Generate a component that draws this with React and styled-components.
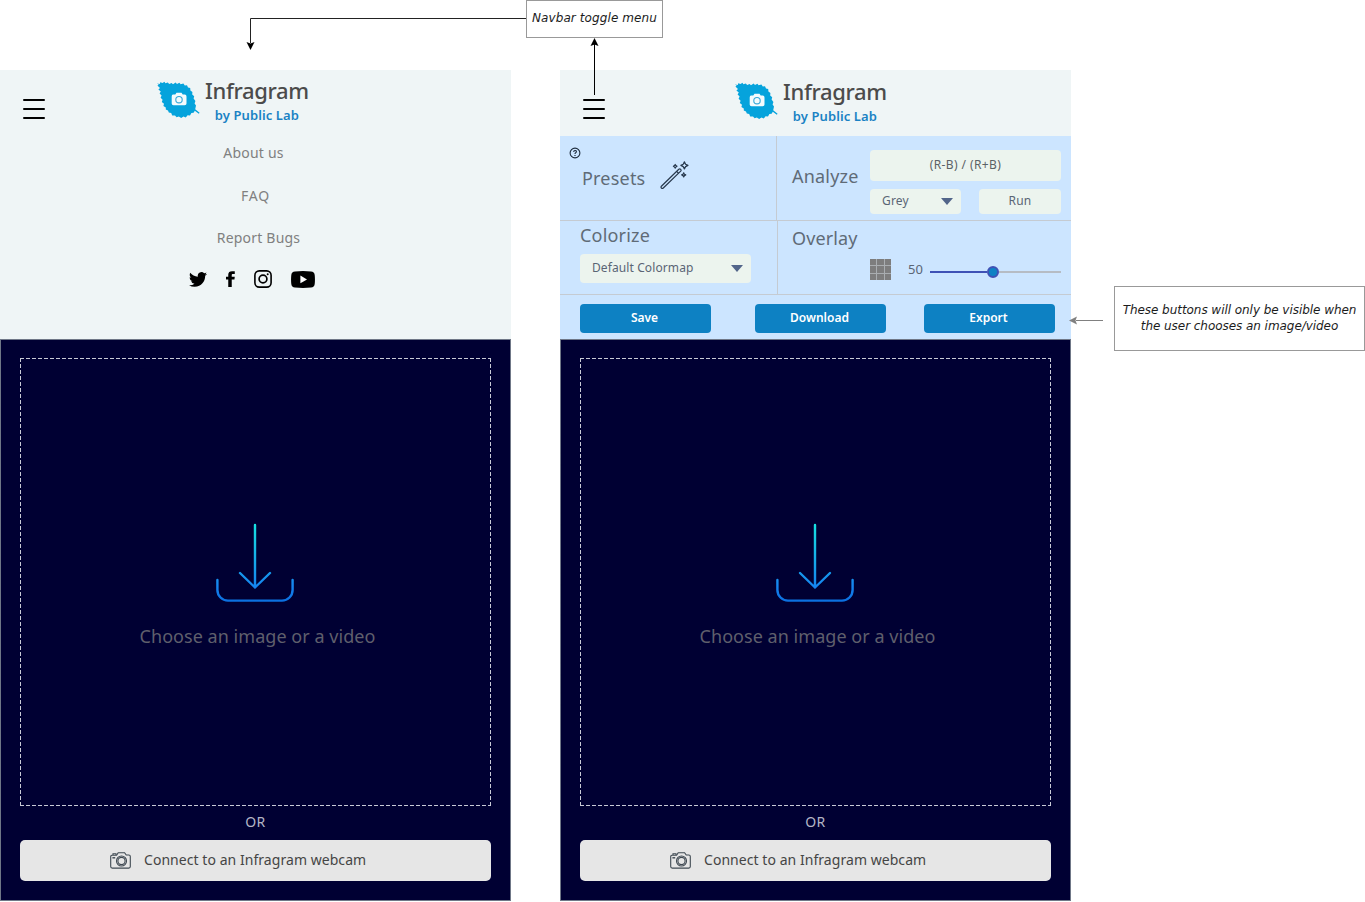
import React, { useState } from 'react';
import styled, { createGlobalStyle } from 'styled-components';

const GlobalStyle = createGlobalStyle`
  * {
    box-sizing: border-box;
  }
  body {
    margin: 0;
    background-color: #ffffff;
    font-family: 'Noto Sans', 'Open Sans', sans-serif;
    overflow: hidden;
  }
  svg {
    display: block;
    flex-shrink: 0;
  }
  button {
    font-family: inherit;
    border: 0;
    padding: 0;
    cursor: pointer;
  }
`

const Board = styled.div`
  position: relative;
  width: 1365px;
  height: 902px;
`

const TopRow = styled.div`
  height: 70px;
  padding-left: 526px;
`

const Note = styled.div`
  display: flex;
  align-items: center;
  justify-content: center;
  text-align: center;
  width: ${props => props.$width}px;
  height: ${props => props.$height}px;
  padding-bottom: 2px;
  border: 1px solid #999999;
  background-color: #ffffff;
  color: #1c1c1c;
  font-family: 'DejaVu Sans', sans-serif;
  font-size: 12px;
  font-style: italic;
  line-height: 16px;
  letter-spacing: ${props => props.$spacing}px;
  white-space: nowrap;
`

const Connectors = styled.svg`
  position: absolute;
  left: 0;
  top: 0;
  pointer-events: none;
`

const Screens = styled.div`
  display: flex;
`

const Phone = styled.div`
  width: 511px;
  height: 831px;
  margin-right: ${props => props.$gap}px;
  display: flex;
  flex-direction: column;
`

const SideNote = styled.div`
  padding-top: 216px;
`

const Text = styled.span`
  display: block;
  white-space: nowrap;
  font-size: ${props => props.$size || 14}px;
  line-height: ${props => props.$line || 20}px;
  font-weight: ${props => props.$weight || 400};
  letter-spacing: ${props => props.$spacing || 0}px;
  color: ${props => props.$color || '#808080'};
`

const Header = styled.header`
  height: 66px;
  display: flex;
  background-color: #eff5f6;
`

const MenuButton = styled.button`
  width: 22px;
  height: 20px;
  margin: 29px 0 0 23px;
  display: flex;
  flex-direction: column;
  justify-content: space-between;
  background: none;
  span {
    height: 2px;
    width: 22px;
    border-radius: 1px;
    background-color: #000000;
  }
`

const Brand = styled.div`
  display: flex;
  margin-left: ${props => props.$left}px;
  padding-top: ${props => props.$top}px;
`

const BrandName = styled.div`
  margin-left: 5px;
  display: flex;
  flex-direction: column;
  align-items: center;
`

const NavMenu = styled.nav`
  height: 203px;
  background-color: #eff5f6;
  display: flex;
  flex-direction: column;
  align-items: center;
`

const NavLink = styled(Text)`
  height: 20px;
  margin: ${props => props.$margin};
`

const Social = styled.div`
  display: flex;
  align-items: center;
  height: 20px;
  margin: 21px 0 0 -7px;
  svg + svg {
    margin-left: 19px;
  }
`

const Controls = styled.div`
  height: 203px;
  background-color: #cce5ff;
`

const ControlRow = styled.div`
  display: flex;
  height: ${props => props.$height}px;
  border-bottom: 1px solid #c5cbd2;
`

const Pane = styled.div`
  width: ${props => props.$width}px;
  padding: ${props => props.$padding};
  border-right: ${props => (props.$divider ? '1px solid #c5cbd2' : '0')};
`

const PaneTitle = styled(Text).attrs({
  $size: 18,
  $line: 24,
  $color: '#5f6b77'
})``

const Line = styled.div`
  display: flex;
  align-items: flex-start;
`

const PresetLine = styled(Line)`
  gap: 15px;
  padding: 2px 0 0 13px;
  ${PaneTitle} {
    margin-top: 5px;
  }
`

const AnalyzeLine = styled(Line)`
  ${PaneTitle} {
    width: 78px;
    margin-top: 14px;
  }
`

const OverlayLine = styled(Line)`
  padding: 9px 0 0 78px;
`

const Percent = styled(Text)`
  width: 22px;
  margin-left: 17px;
`

const AnalyzeGrid = styled.div`
  display: grid;
  grid-template-columns: 91px 82px;
  grid-template-rows: 31px 25px;
  gap: 8px 18px;
`

const Field = styled.div`
  display: flex;
  align-items: center;
  justify-content: ${props => (props.$select ? 'space-between' : 'center')};
  grid-column: ${props => (props.$wide ? '1 / 3' : 'auto')};
  width: ${props => (props.$width ? `${props.$width}px` : '100%')};
  height: ${props => props.$height}px;
  padding: ${props => (props.$select ? '0 8px 2px 12px' : '0 0 2px')};
  border-radius: 4px;
  background-color: #ecf4ee;
`

const ColormapLine = styled(Line)`
  margin-top: 7px;
`

const Caret = styled.div`
  width: 0;
  height: 0;
  margin-top: 2px;
  border: 6px solid transparent;
  border-top: 7px solid #52658a;
  border-bottom: 0;
`

const Tiles = styled.div`
  width: 21px;
  height: 21px;
  display: grid;
  grid-template-columns: repeat(3, 1fr);
  gap: 1px;
  background-color: #a9adb0;
  span {
    background-color: #7d7d7d;
  }
`

const Slider = styled.div`
  display: flex;
  align-items: center;
  width: 131px;
  height: 12px;
  margin-top: 7px;
`

const Track = styled.div`
  flex: ${props => props.$grow};
  height: 2px;
  background-color: ${props => props.$color};
`

const Thumb = styled.div`
  width: 12px;
  height: 12px;
  border-radius: 50%;
  border: 2px solid #3f51b5;
  background-color: #0e81c4;
`

const Actions = styled.div`
  display: flex;
  padding: 9px 0 0 20px;
`

const ActionButton = styled.button`
  width: 131px;
  height: 29px;
  margin-right: ${props => props.$gap}px;
  padding: 0 2px 1px 0;
  border-radius: 4px;
  background-color: #0d81c3;
  display: flex;
  align-items: center;
  justify-content: center;
`

const Stage = styled.main`
  flex: 1;
  display: flex;
  flex-direction: column;
  align-items: center;
  padding: 18px 19px 19px;
  border: 1px solid #6f7787;
  background-color: #000033;
`

const DropFrame = styled.div`
  width: 471px;
  height: 448px;
  background:
    repeating-linear-gradient(90deg, #c8cad6 0 4px, transparent 4px 6px) 0 0 / 100% 1px no-repeat,
    repeating-linear-gradient(90deg, #c8cad6 0 4px, transparent 4px 6px) 0 100% / 100% 1px no-repeat,
    repeating-linear-gradient(180deg, #c8cad6 0 4px, transparent 4px 6px) 0 0 / 1px 100% no-repeat,
    repeating-linear-gradient(180deg, #c8cad6 0 4px, transparent 4px 6px) 100% 0 / 1px 100% no-repeat;
`

const DropArea = styled.div`
  display: flex;
  flex-direction: column;
  align-items: center;
  padding: 165px 1px 0 0;
`

const DropText = styled(Text)`
  margin: 21px 0 0 5px;
`

const OrText = styled(Text)`
  height: 34px;
`

const WebcamButton = styled.button`
  width: 471px;
  height: 41px;
  display: flex;
  align-items: center;
  padding-left: 90px;
  border-radius: 5px;
  background-color: #e6e6e6;
  span {
    margin: 0 0 2px 13px;
  }
`

const LeafLogo = () => (
  <svg width="43" height="38" viewBox="0 0 43 38">
    <path
      fill="#05a3dc"
      d="M0 2.4 L2.8 3 L3.2 1.2 L5.6 2 L7.4 0.8 L8.4 2.2 L10.8 1.6 L12.2 3 L14.6 2 L16 3.2 L18.6 1.6 L20 3 L22.4 1.8 L23.6 3.2 L26.4 2.4 L27.8 4.4 L30 4.2 L31 6.6 L33.2 7 L33.4 9.4 L35.4 11 L35.2 13.4 L37.2 15.2 L36.6 17.6 L38.4 20 L37.6 22.4 L39 24.4 L38.2 28.2 L42.6 31.8 L41.8 32.8 L37.8 29.8 L36.6 31.8 L34.4 32 L33 34.6 L30.6 34.2 L28.8 36.4 L26.4 35.4 L24.2 37 L21.8 35.6 L19.6 36.2 L18 34.4 L15.2 34.4 L14.2 32 L11.8 31.4 L11 29.4 L8.8 28.6 L8.8 26.4 L6.4 25 L7 22.8 L4.8 21 L5.6 18.8 L3.6 16.8 L4.6 14.6 L2.6 12.6 L3.8 10.6 L1.4 8.6 L3 7 L0.4 4.6 L1.8 3.8 Z"
    />
    <path
      fill="#f4fbfd"
      d="M16 13.6 H18.3 L19.5 11.8 H24.5 L25.7 13.6 H27.7 Q29.5 13.6 29.5 15.4 V22.4 Q29.5 24.2 27.7 24.2 H16.5 Q14.7 24.2 14.7 22.4 V15.4 Q14.7 13.6 16 13.6 Z"
    />
    <circle cx="22" cy="18.7" r="3.2" fill="none" stroke="#35a8d8" strokeWidth="1.1" />
  </svg>
)

const TwitterIcon = () => (
  <svg width="18" height="15" viewBox="0 2 24 20" preserveAspectRatio="none">
    <path d="M23.953 4.57a10 10 0 01-2.825.775 4.958 4.958 0 002.163-2.723c-.951.555-2.005.959-3.127 1.184a4.92 4.92 0 00-8.384 4.482C7.69 8.095 4.067 6.13 1.64 3.162a4.822 4.822 0 00-.666 2.475c0 1.71.87 3.213 2.188 4.096a4.904 4.904 0 01-2.228-.616v.06a4.923 4.923 0 003.946 4.827 4.996 4.996 0 01-2.212.085 4.936 4.936 0 004.604 3.417 9.867 9.867 0 01-6.102 2.105c-.39 0-.779-.023-1.17-.067a13.995 13.995 0 007.557 2.209c9.053 0 13.998-7.496 13.998-13.985 0-.21 0-.42-.015-.63A9.935 9.935 0 0024 4.59z" />
  </svg>
)

const FacebookIcon = () => (
  <svg width="9" height="16" viewBox="0 0 8 16" preserveAspectRatio="none">
    <path d="M2 16 V8.6 H0 V5.8 H2 V3.8 C2 1.4 3.2 0.3 5.4 0.3 H7.8 V3 H6.3 C5.3 3 5.1 3.4 5.1 4.2 V5.8 H7.8 L7.5 8.6 H5.1 V16 Z" />
  </svg>
)

const InstagramIcon = () => (
  <svg width="18" height="18" viewBox="0 0 18 18" fill="none" stroke="#000000">
    <rect x="0.9" y="0.9" width="16.2" height="16.2" rx="4.4" strokeWidth="1.6" />
    <circle cx="9" cy="9" r="3.9" strokeWidth="1.7" />
    <circle cx="13.7" cy="4.3" r="1" fill="#000000" stroke="none" />
  </svg>
)

const YoutubeIcon = () => (
  <svg width="24" height="17" viewBox="0 0 24 17">
    <path d="M4 0.4 Q12 -0.2 20 0.4 Q23.4 0.6 23.7 4 Q24.2 8.5 23.7 13 Q23.4 16.3 20 16.6 Q12 17.2 4 16.6 Q0.6 16.3 0.3 13 Q-0.2 8.5 0.3 4 Q0.6 0.6 4 0.4 Z" />
    <path fill="#ffffff" d="M9.4 4.6 L16 8.4 L9.4 12.2 Z" />
  </svg>
)

const HelpIcon = () => (
  <svg width="12" height="12" viewBox="0 0 12 12" fill="none" stroke="#1d2b3c">
    <circle cx="6" cy="6" r="4.9" strokeWidth="1.1" />
    <path d="M4.7 4.9 C4.7 3.1 7.4 3.1 7.4 4.7 C7.4 5.7 6 5.7 6 7" strokeWidth="1.1" />
    <path d="M6 8 V9" strokeWidth="1.2" />
  </svg>
)

const WandIcon = () => (
  <svg width="29" height="29" viewBox="0 0 29 29" fill="none" stroke="#27384c" strokeWidth="1.2" strokeLinejoin="round">
    <path d="M1.4 25.2 L18.8 8.2 Q19.8 7.4 20.7 8.3 Q21.5 9.2 20.7 10.1 L3.3 27 Q2.3 27.8 1.4 27 Q0.6 26.1 1.4 25.2 Z" />
    <path d="M16.6 10.4 L18.6 12.3" />
    <path d="M24.4 0.9 L25.6 3.2 L27.9 4.4 L25.6 5.6 L24.4 7.9 L23.2 5.6 L20.9 4.4 L23.2 3.2 Z" />
    <path d="M15.2 3.5 L15.9 4.6 L17 5.3 L15.9 6 L15.2 7.1 L14.5 6 L13.4 5.3 L14.5 4.6 Z" />
    <path d="M23.7 11.9 L24.4 13.2 L25.7 13.9 L24.4 14.6 L23.7 15.9 L23 14.6 L21.7 13.9 L23 13.2 Z" />
  </svg>
)

const DownloadIcon = () => (
  <svg width="80" height="80" viewBox="0 0 80 80" fill="none" strokeWidth="2.4" strokeLinecap="round" strokeLinejoin="round">
    <defs>
      <linearGradient id="arrow" gradientUnits="userSpaceOnUse" x1="0" y1="0" x2="0" y2="80">
        <stop offset="0" stopColor="#17e3e0" />
        <stop offset="0.8" stopColor="#1583f0" />
        <stop offset="1" stopColor="#0a6ddd" />
      </linearGradient>
    </defs>
    <path stroke="url(#arrow)" d="M40 2 V64.5 M25 50 L40 64.5 L55 50" />
    <path stroke="url(#arrow)" d="M2.4 57 V67 A10.6 10.6 0 0 0 13 77.6 H67 A10.6 10.6 0 0 0 77.6 67 V57" />
  </svg>
)

const CameraIcon = () => (
  <svg width="21" height="17" viewBox="0 0 21 17" fill="none" stroke="#3f4952" strokeWidth="1.1">
    <path d="M1.5 3.3 H6.6 L8.2 0.8 H14.6 L16.2 3 H18.8 Q20.3 3 20.3 4.5 V14.6 Q20.3 16.1 18.8 16.1 H2.2 Q0.7 16.1 0.7 14.6 V4.8 Q0.7 3.3 2 3.3 Z" />
    <path d="M3 3 V1.8 H6 V3" />
    <path d="M2.4 5.8 H5.2" strokeWidth="1.4" />
    <circle cx="11.5" cy="9" r="5" />
    <circle cx="11.5" cy="9" r="3.6" />
  </svg>
)

const AppHeader = ({ left, top, onToggle }) => (
  <Header>
    <MenuButton onClick={onToggle}>
      <span />
      <span />
      <span />
    </MenuButton>
    <Brand $left={left} $top={top}>
      <LeafLogo />
      <BrandName>
        <Text $size={22} $line={18} $weight={500} $color="#4b4b4b" $spacing={-0.35}>Infragram</Text>
        <Text $size={13} $line={33} $weight={600} $color="#1a82c4" $spacing={0.1}>by Public Lab</Text>
      </BrandName>
    </Brand>
  </Header>
)

const Navigation = () => (
  <NavMenu>
    <NavLink $margin="7px 0 0 -4px" $spacing={0.2}>About us</NavLink>
    <NavLink $margin="23px 0 0 0" $spacing={0.8}>FAQ</NavLink>
    <NavLink $margin="22px 0 0 6px" $spacing={0.2}>Report Bugs</NavLink>
    <Social>
      <TwitterIcon />
      <FacebookIcon />
      <InstagramIcon />
      <YoutubeIcon />
    </Social>
  </NavMenu>
)

const Toolbox = () => {

  const [ overlay ] = useState(50);

  return (
    <Controls>
      <ControlRow $height={85}>
        <Pane $width={217} $padding="11px 0 0 9px" $divider>
          <HelpIcon />
          <PresetLine>
            <PaneTitle $spacing={0.2}>Presets</PaneTitle>
            <WandIcon />
          </PresetLine>
        </Pane>
        <Pane $width={294} $padding="14px 0 0 15px">
          <AnalyzeLine>
            <PaneTitle $spacing={0.2}>Analyze</PaneTitle>
            <AnalyzeGrid>
              <Field $wide $height={31}>
                <Text $size={12} $color="#5c6266" $spacing={0.4}>(R-B) / (R+B)</Text>
              </Field>
              <Field $select $height={25}>
                <Text $size={12} $color="#5a6575" $spacing={0.2}>Grey</Text>
                <Caret />
              </Field>
              <Field $height={25}>
                <Text $size={12} $color="#5a6575" $spacing={0.3}>Run</Text>
              </Field>
            </AnalyzeGrid>
          </AnalyzeLine>
        </Pane>
      </ControlRow>
      <ControlRow $height={74}>
        <Pane $width={218} $padding="2px 0 0 20px" $divider>
          <PaneTitle $spacing={0.2}>Colorize</PaneTitle>
          <ColormapLine>
            <Field $select $width={171} $height={29}>
              <Text $size={12} $color="#5a6575" $spacing={0.1}>Default Colormap</Text>
              <Caret />
            </Field>
          </ColormapLine>
        </Pane>
        <Pane $width={293} $padding="5px 0 0 14px">
          <PaneTitle $spacing={0.1}>Overlay</PaneTitle>
          <OverlayLine>
            <Tiles>
              {[...Array(9)].map((_, i) => <span key={i} />)}
            </Tiles>
            <Percent $size={13} $color="#5a6575">{overlay}</Percent>
            <Slider>
              <Track $grow={57} $color="#3f51b5" />
              <Thumb />
              <Track $grow={62} $color="#b6bcc4" />
            </Slider>
          </OverlayLine>
        </Pane>
      </ControlRow>
      <Actions>
        {[['Save', 44], ['Download', 38], ['Export', 0]].map(([ label, gap ]) => (
          <ActionButton key={label} $gap={gap}>
            <Text $size={12} $weight={600} $color="#ffffff">{label}</Text>
          </ActionButton>
        ))}
      </Actions>
    </Controls>
  )
}

const Uploader = () => (
  <Stage>
    <DropFrame>
      <DropArea>
        <DownloadIcon />
        <DropText $size={18} $line={24} $color="#5f5f6c" $spacing={0.04}>Choose an image or a video</DropText>
      </DropArea>
    </DropFrame>
    <OrText $line={32} $spacing={0.5} $color="#b3b5c6">OR</OrText>
    <WebcamButton>
      <CameraIcon />
      <Text $color="#454545" $spacing={0.05}>Connect to an Infragram webcam</Text>
    </WebcamButton>
  </Stage>
)

const App = () => {

  const [ menu, setMenu ] = useState([ true, false ]);

  const toggle = (index) => {
    setMenu(menu.map((open, i) => (i === index ? !open : open)))
  }

  return (
    <>
      <GlobalStyle />
      <Board>
        <TopRow>
          <Note $width={137} $height={38} $spacing={0.1}>Navbar toggle menu</Note>
        </TopRow>
        <Screens>
          <Phone $gap={49}>
            <AppHeader left={112} top={11} onToggle={() => toggle(0)} />
            {menu[0] ? <Navigation /> : <Toolbox />}
            <Uploader />
          </Phone>
          <Phone $gap={43}>
            <AppHeader left={130} top={12} onToggle={() => toggle(1)} />
            {menu[1] ? <Navigation /> : <Toolbox />}
            <Uploader />
          </Phone>
          <SideNote>
            <Note $width={251} $height={65} $spacing={-0.05}>
              These buttons will only be visible when<br />the user chooses an image/video
            </Note>
          </SideNote>
        </Screens>
        <Connectors width="1365" height="902" viewBox="0 0 1365 902">
          <path d="M526 18.5 H250.5 V43" fill="none" stroke="#222222" />
          <path d="M250.5 50 L246.5 42 L250.5 43.5 L254.5 42 Z" />
          <path d="M594.5 95 V44" fill="none" stroke="#000000" />
          <path d="M594.5 38 L590.5 46 L594.5 44.5 L598.5 46 Z" />
          <path d="M1103 320.5 H1076" fill="none" stroke="#808080" />
          <path d="M1069 320.5 L1077 316.5 L1075.5 320.5 L1077 324.5 Z" fill="#808080" />
        </Connectors>
      </Board>
    </>
  )
}

export default App;
